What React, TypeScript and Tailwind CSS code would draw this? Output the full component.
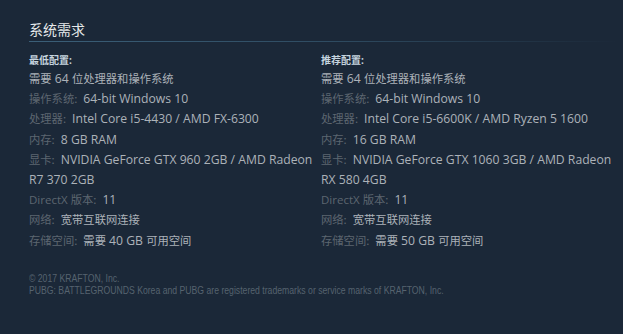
const font = { fontFamily: '"Open Sans", Arial, "Noto Sans CJK SC", sans-serif' }

type Req = { label?: string; value: string }

const minimum: Req[] = [
  { value: '需要 64 位处理器和操作系统' },
  { label: '操作系统:', value: '64-bit Windows 10' },
  { label: '处理器:', value: 'Intel Core i5-4430 / AMD FX-6300' },
  { label: '内存:', value: '8 GB RAM' },
  { label: '显卡:', value: 'NVIDIA GeForce GTX 960 2GB / AMD Radeon R7 370 2GB' },
  { label: 'DirectX 版本:', value: '11' },
  { label: '网络:', value: '宽带互联网连接' },
  { label: '存储空间:', value: '需要 40 GB 可用空间' },
]

const recommended: Req[] = [
  { value: '需要 64 位处理器和操作系统' },
  { label: '操作系统:', value: '64-bit Windows 10' },
  { label: '处理器:', value: 'Intel Core i5-6600K / AMD Ryzen 5 1600' },
  { label: '内存:', value: '16 GB RAM' },
  { label: '显卡:', value: 'NVIDIA GeForce GTX 1060 3GB / AMD Radeon RX 580 4GB' },
  { label: 'DirectX 版本:', value: '11' },
  { label: '网络:', value: '宽带互联网连接' },
  { label: '存储空间:', value: '需要 50 GB 可用空间' },
]

// 中文字形比拉丁字母小一点, 跟 Steam 的回退字体一样
function Mixed({ text }: { text: string }) {
  const parts = text.split(/([\u3400-\u9fff:]+)/).filter(Boolean)
  return (
    <>
      {parts.map((p, i) =>
        /[\u3400-\u9fff:]/.test(p) ? (
          <span key={i} className="text-[11.3px] leading-none" style={{ fontFamily: '"Noto Sans CJK SC", sans-serif' }}>
            {p}
          </span>
        ) : (
          <span key={i} className="leading-none">{p}</span>
        )
      )}
    </>
  )
}

function ReqColumn({ title, items }: { title: string; items: Req[] }) {
  return (
    <div>
      <div className="text-[10px] font-bold leading-[14px] text-[#c6d4df] mb-[2px]">{title}</div>
      <ul className="text-[12.2px] leading-[20.2px] text-[#acb2b8]">
        {items.map((r, i) => (
          <li key={i}>
            {r.label && (
              <span className="text-[11.5px] leading-none text-[#5d6670] mr-[6px]">
                <Mixed text={r.label} />
              </span>
            )}
            <Mixed text={r.value} />
          </li>
        ))}
      </ul>
    </div>
  )
}

export default function App() {
  return (
    <div className="w-[623px] h-[334px] bg-[#1b2838] overflow-hidden" style={font}>
      <div className="pl-[29px] pr-[4px] pt-[20px]">
        {/* 标题 */}
        <h2 className="text-[14px] leading-[20px] text-[#e5e8ea]">系统需求</h2>
        <div className="h-px mt-[1px] bg-gradient-to-r from-[#3b5f78] via-[#2f4c62] to-transparent"></div>

        <div className="grid grid-cols-[288px_1fr] gap-x-[4px] mt-[11px]">
          <ReqColumn title="最低配置:" items={minimum} />
          <ReqColumn title="推荐配置:" items={recommended} />
        </div>

        {/* 版权 */}
        <div
          className="mt-[21px] text-[10.5px] leading-[12px] text-[#56636f] scale-x-[0.825] origin-left whitespace-nowrap"
          style={{ fontFamily: 'Arial, "Liberation Sans", sans-serif' }}
        >
          <div>© 2017 KRAFTON, Inc.</div>
          <div>PUBG: BATTLEGROUNDS Korea and PUBG are registered trademarks or service marks of KRAFTON, Inc.</div>
        </div>
      </div>
    </div>
  )
}
